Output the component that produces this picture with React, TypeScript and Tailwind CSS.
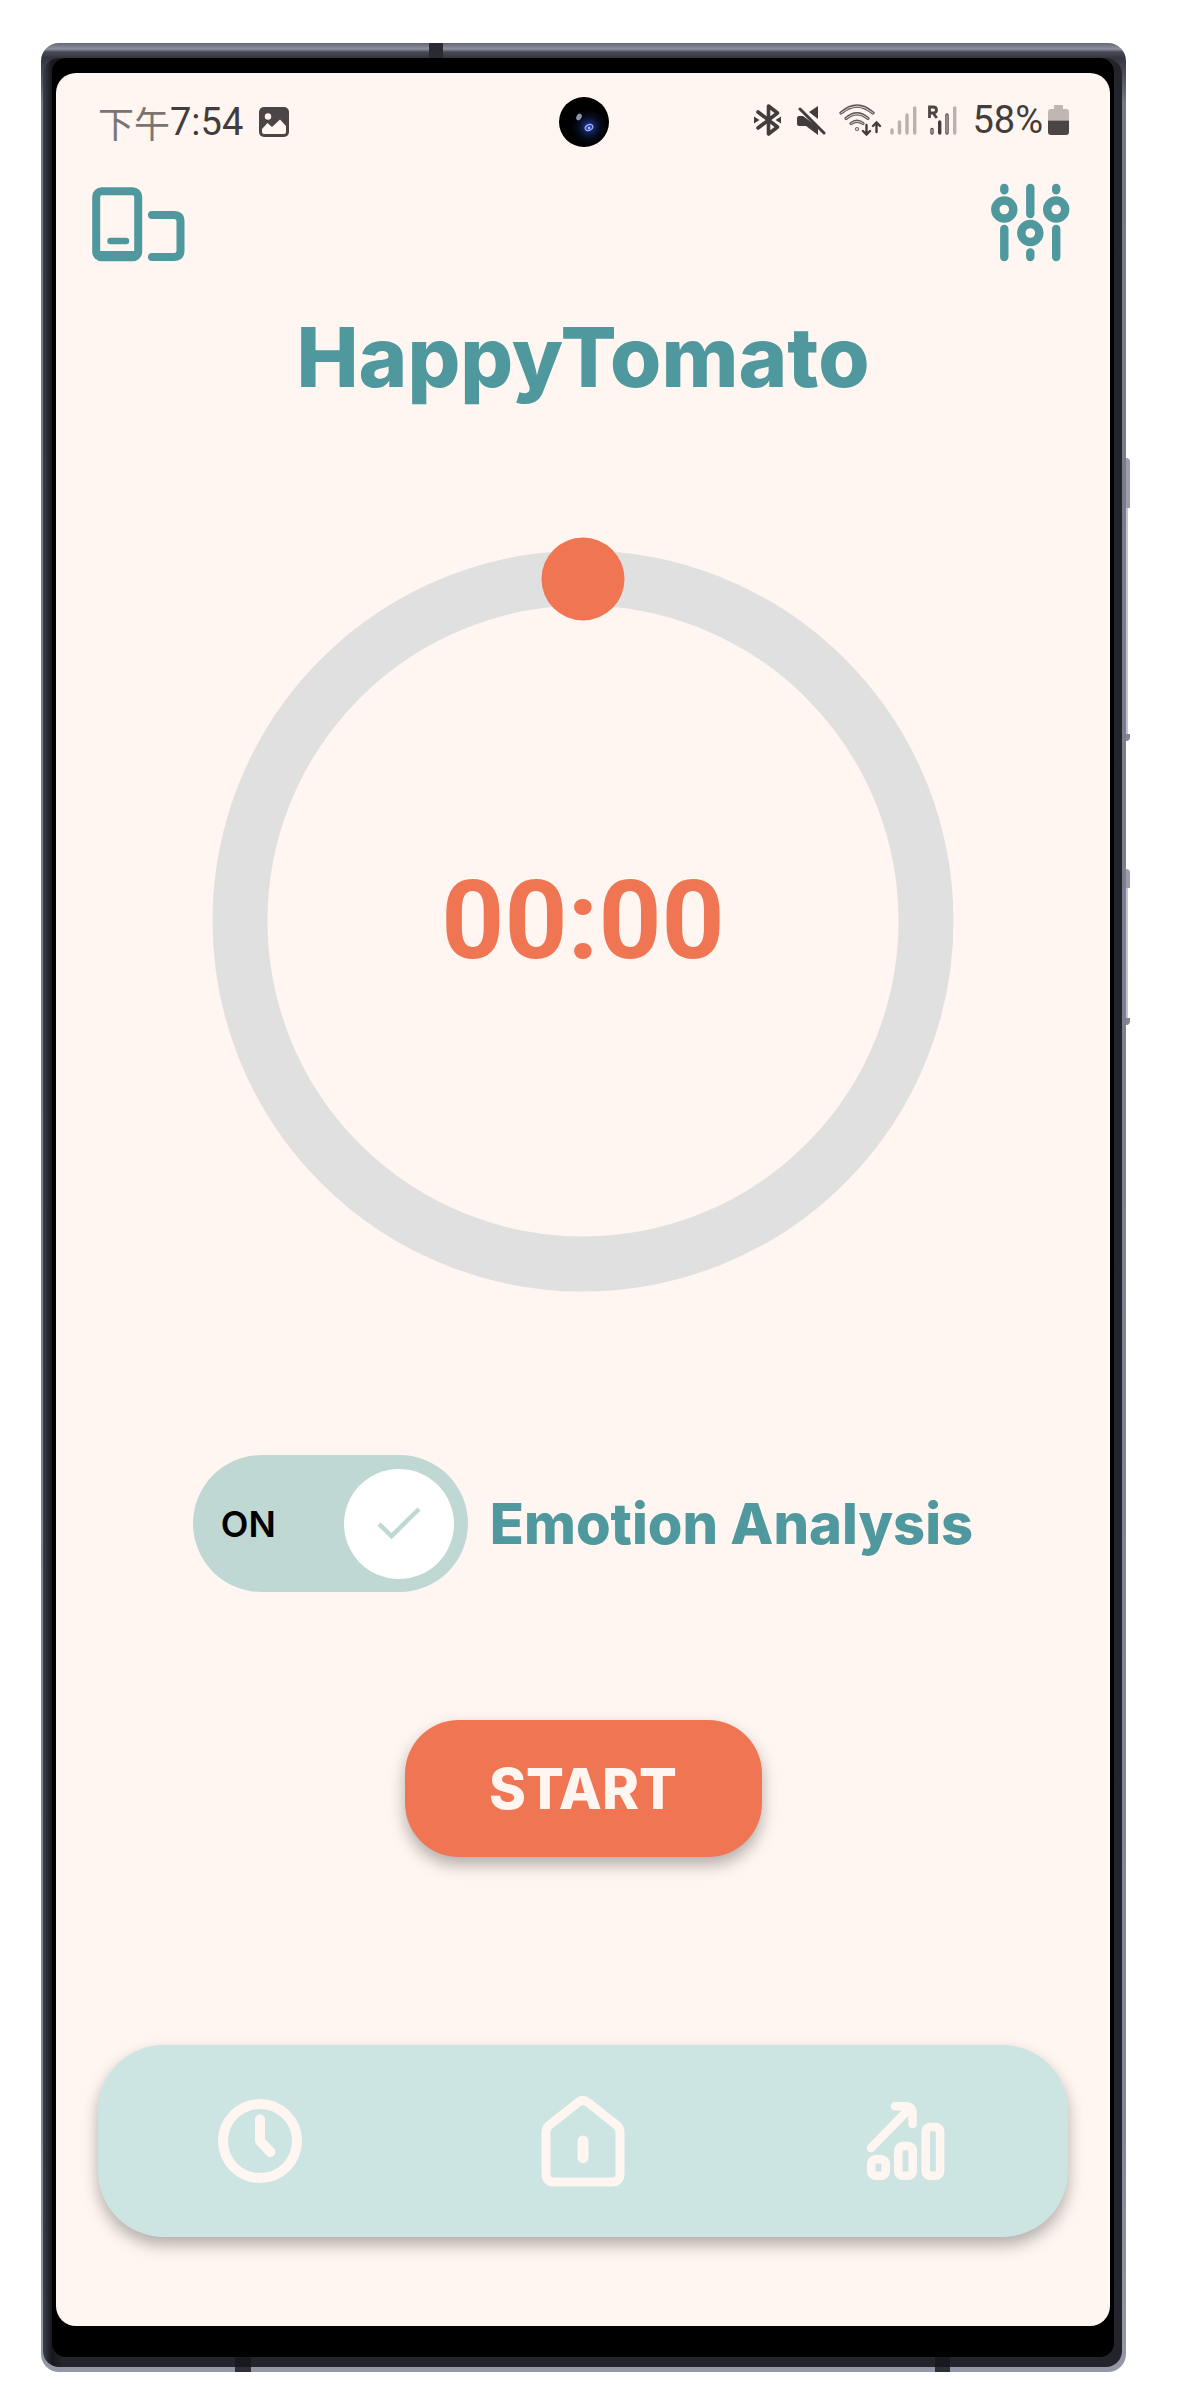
import React, { useState } from "react";

function ImageIcon() {
  return (
    <svg viewBox="0 0 30 30" className="size-[30px]" aria-hidden="true">
      <rect x="0" y="0" width="30" height="30" rx="5" fill="#4b4645" />
      <circle cx="9" cy="9.500" r="3.200" fill="#fff6f1" />
      <path d="M3 22 L8.500 16 L13 20 L21 12.500 L27 19 V25 Q27 27 25 27 H5 Q3 27 3 25 Z" fill="#fff6f1" />
    </svg>
  );
}

function BluetoothIcon() {
  return (
    <svg viewBox="0 0 27 32" className="h-8 w-[27px]" fill="none" stroke="#423d3c" strokeWidth="3.600" strokeLinecap="round" strokeLinejoin="round" aria-hidden="true">
      <path d="M4 8 L23.500 23 L14.500 30 V2 L23.500 9 L4 24" />
      <path d="M0 12.500 L5.500 16 L0 19.500 Z M27 12.500 L21.500 16 L27 19.500 Z" fill="#423d3c" stroke="none" />
    </svg>
  );
}

function MuteIcon() {
  return (
    <svg viewBox="0 0 29 30" className="h-[30px] w-[29px]" aria-hidden="true">
      <path d="M2 11 H6 L21 22 V30 L9 21 H2 Q0 21 0 19 V13 Q0 11 2 11 Z M21 1 V14 L12 7 Z" fill="#423d3c" />
      <path d="M3 4 L27 28" stroke="#423d3c" strokeWidth="3" strokeLinecap="round" />
    </svg>
  );
}

function WifiIcon() {
  return (
    <svg viewBox="0 0 43 32" className="h-8 w-[43px]" fill="none" strokeLinecap="round" aria-hidden="true">
      <g stroke="#5d5755" strokeWidth="3.200">
        <path d="M2 9 Q18 -5 34 9" />
        <path d="M7 14.500 Q18 5 29 14.500" />
        <path d="M12 19.500 Q18 15 24 19.500" />
      </g>
      <g stroke="#fff6f1" strokeWidth="0.800">
        <path d="M2 9 Q18 -5 34 9" />
        <path d="M7 14.500 Q18 5 29 14.500" />
        <path d="M12 19.500 Q18 15 24 19.500" />
      </g>
      <circle cx="18" cy="25" r="1.500" stroke="#6b6563" strokeWidth="1.200" />
      <path d="M27.500 21 V30 M24 27 L27.500 30.500 L31 27 M37.500 28 V19 M34 22 L37.500 18.500 L41 22" stroke="#423d3c" strokeWidth="2.400" />
    </svg>
  );
}

function SignalIcon() {
  return (
    <svg viewBox="0 0 27 29" className="h-[29px] w-[27px]" stroke="#bbb0ac" strokeWidth="3.400" strokeLinecap="round" aria-hidden="true">
      <path d="M2 27 V24 M9.500 27 V16 M17 27 V9 M24.700 27 V2" />
    </svg>
  );
}

function RoamingIcon() {
  return (
    <svg viewBox="0 0 30 30" className="h-[30px] w-[30px]" aria-hidden="true" strokeLinecap="round" fill="none">
      <path d="M2.500 13 V2 H6 Q9.500 2 9.500 5 Q9.500 8 6 8 H2.500 M6 8 L9.800 13" stroke="#4b4645" strokeWidth="2.800" strokeLinecap="butt" />
      <path d="M5 28 V24.500 M20 28 V10" stroke="#4b4645" strokeWidth="3.400" />
      <path d="M5 28 V24.500 M20 28 V10" stroke="#d8cdc9" strokeWidth="1" />
      <path d="M12.700 28 V17" stroke="#423d3c" strokeWidth="3.400" />
      <path d="M27.700 28 V3" stroke="#bbb0ac" strokeWidth="3.400" />
    </svg>
  );
}

function BatteryIcon() {
  return (
    <svg viewBox="0 0 22 30" className="h-[30px] w-[22px]" aria-hidden="true">
      <path d="M7 0 H14 Q15 0 15 1 V4 H18 Q21 4 21 7 V15.500 H0 V7 Q0 4 3 4 H6 V1 Q6 0 7 0 Z" fill="#c2b6b3" />
      <path d="M0 15.500 H21 V27 Q21 30 18 30 H3 Q0 30 0 27 Z" fill="#4b4645" />
    </svg>
  );
}

function DevicesIcon() {
  return (
    <svg viewBox="0 0 93 75" className="h-[75px] w-[93px]" fill="none" stroke="#4f989e" strokeLinecap="round" aria-hidden="true">
      <rect x="4.200" y="4.200" width="42" height="66" rx="5.500" strokeWidth="8" />
      <path d="M6 68 H44" strokeWidth="8" />
      <path d="M18.500 54 H34" strokeWidth="6.500" />
      <path d="M60 28 H82 Q88.500 28 88.500 34.500 V63.500 Q88.500 70 82 70 H60" strokeWidth="8" />
    </svg>
  );
}

function SlidersIcon() {
  return (
    <svg viewBox="0 0 79 79" className="size-[79px]" fill="none" stroke="#4f989e" strokeWidth="8.400" strokeLinecap="round" aria-hidden="true">
      <path d="M13.300 5 V7.200 M13.300 46 V74 M39.300 5 V31 M39.300 69.500 V74 M65.200 5 V7.200 M65.200 46 V74" />
      <circle cx="13.300" cy="26.500" r="9" />
      <circle cx="39.300" cy="50" r="9" />
      <circle cx="65.200" cy="26.500" r="9" />
    </svg>
  );
}

function ClockIcon() {
  return (
    <svg viewBox="0 0 86 92" className="h-[92px] w-[86px]" fill="none" stroke="#fff6f1" strokeWidth="10" strokeLinecap="round" strokeLinejoin="round" aria-hidden="true">
      <circle cx="43" cy="46" r="37" />
      <path d="M43 24.500 V46 L53.500 57" />
    </svg>
  );
}

function HomeIcon() {
  return (
    <svg viewBox="0 0 84 92" className="h-[92px] w-[84px]" fill="none" stroke="#fff6f1" strokeLinecap="round" strokeLinejoin="round" aria-hidden="true">
      <path d="M37 7.500 Q42 3.500 47 7.500 L75.500 30 Q79 33 79 37 V78.500 Q79 87 71 87 H13 Q5 87 5 78.500 V37 Q5 33 8.500 30 Z" strokeWidth="9" />
      <path d="M42 46 V62.500" strokeWidth="11" />
    </svg>
  );
}

function ChartIcon() {
  return (
    <svg viewBox="0 0 80 80" className="size-[80px]" fill="none" stroke="#fff6f1" strokeWidth="8.600" strokeLinecap="round" aria-hidden="true">
      <path d="M5 47 L43 8 M29 5.300 H40 Q46.500 5.300 46.500 12 V23" />
      <rect x="5.300" y="58.300" width="14.400" height="16.400" rx="4.500" />
      <rect x="32.300" y="45" width="14.400" height="29.700" rx="4.500" />
      <rect x="59.700" y="26" width="14.400" height="48.700" rx="4.500" />
    </svg>
  );
}

function StatusBar() {
  return (
    <div className="flex items-start justify-between pl-[42px] pr-10 pt-6 text-[#423d3c]">
      <div className="flex h-[50px] w-[380px] items-center gap-4">
        <span className="flex items-center font-[Roboto,sans-serif] text-[38px] leading-[50px]">
          <span className="font-['Noto_Sans_CJK_TC',sans-serif] text-[36px] text-[#7a7472]">下午</span>
          <span>7:54</span>
        </span>
        <ImageIcon />
      </div>
      <div className="size-[50px] rounded-full bg-[radial-gradient(circle_at_60%_60%,#2a55c8_0px,#13235f_5px,#070b1c_11px,#000_18px)]">
        <svg viewBox="0 0 50 50" className="size-full" aria-hidden="true">
          <ellipse cx="20" cy="20" rx="2.500" ry="3.500" fill="#8a94ac" transform="rotate(30 20 20)" />
          <ellipse cx="30" cy="30.500" rx="4" ry="2.800" fill="#2748c0" stroke="#b8caff" transform="rotate(-25 30 30.500)" />
          <circle cx="30" cy="31" r="1" fill="#fff" />
        </svg>
      </div>
      <div className="flex h-[46px] w-[380px] items-center justify-end">
        <BluetoothIcon />
        <span className="ml-4"><MuteIcon /></span>
        <span className="ml-[13px]"><WifiIcon /></span>
        <span className="ml-2"><SignalIcon /></span>
        <span className="ml-[10px]"><RoamingIcon /></span>
        <span className="ml-[15px] font-[Roboto,sans-serif] text-[38px] leading-[46px]">58%</span>
        <span className="ml-[5px]"><BatteryIcon /></span>
      </div>
    </div>
  );
}

function TimerDial() {
  return (
    <div className="relative mx-auto mt-[130px] flex h-[768px] w-[768px] max-w-full items-center justify-center">
      <svg viewBox="0 0 768 768" className="absolute inset-0 size-full" aria-hidden="true">
        <circle cx="384" cy="384" r="343" fill="none" stroke="#e0e0e0" strokeWidth="55" />
        <circle cx="384" cy="42" r="41.500" fill="#ef7553" />
      </svg>
      <time className="relative font-[Roboto,sans-serif] text-[110px] font-bold leading-[120px] text-[#ef7553]">00:00</time>
    </div>
  );
}

function EmotionToggle() {
  const [on, setOn] = useState(true);
  return (
    <div className="mt-[150px] flex items-center justify-center gap-[22px]">
      <label htmlFor="emotion" className="relative flex h-[137px] w-[275px] cursor-pointer items-center justify-between rounded-full bg-[#c0d8d3] pl-7 pr-[14px]">
        <input id="emotion" type="checkbox" role="switch" checked={on} onChange={() => setOn(!on)} aria-label="Emotion Analysis" className="absolute inset-0 size-full cursor-pointer opacity-0" />
        <span className="text-4xl font-semibold text-black">{on ? "ON" : "OFF"}</span>
        <span className="flex size-[110px] items-center justify-center rounded-full bg-white">
          <svg viewBox="0 0 44 34" className="h-[34px] w-11" fill="none" stroke="#c0d8d3" strokeWidth="4.500" aria-hidden="true">
            <path d="M2 17 L14.500 29 L42 2" />
          </svg>
        </span>
      </label>
      <span className="text-[56px] font-extrabold leading-[68px] text-[#4f989e]">Emotion Analysis</span>
    </div>
  );
}

export default function App() {
  return (
    <main className="bg-white pb-9 pl-[41px] pr-14 pt-[43px] font-[Inter,sans-serif]">
      <div className="relative rounded-[18px] bg-[linear-gradient(to_bottom,#666774_0px,#8e8fa0_6px,#484a55_9px,#33353e_15px,#777889_60px,#85869a_90%,#9596a6_100%)] pb-[5px] pl-[2px] pr-1 pt-[15px]">
        <i className="absolute left-[388px] top-0 h-[15px] w-[14px] bg-[#292a32]" />
        <i className="absolute bottom-0 left-[194px] z-10 h-[15px] w-4 bg-[#15161b]/80" />
        <i className="absolute bottom-0 right-[176px] z-10 h-[15px] w-[15px] bg-[#15161b]/80" />
        <div className="absolute -right-1 top-[415px] flex h-[283px] w-1 flex-col items-start justify-between bg-[linear-gradient(to_right,#c3c4cf_2px,transparent_2px)]">
          <i className="h-[50px] w-1 rounded-tr-sm bg-[#9c9dad]" />
          <i className="h-[7px] w-1 rounded-br-sm bg-[#85869a]" />
        </div>
        <div className="absolute -right-1 top-[826px] flex h-[156px] w-1 flex-col items-start justify-between bg-[linear-gradient(to_right,#c3c4cf_2px,transparent_2px)]">
          <i className="h-[19px] w-1 rounded-tr-sm bg-[#9c9dad]" />
          <i className="h-[7px] w-1 rounded-br-sm bg-[#85869a]" />
        </div>
        <div className="rounded-[16px] bg-[linear-gradient(to_right,#3d3f4a_0px,#17181c_9px,#24252c_20px,#24252c_calc(100%-12px),#22232b_100%)] pb-[10px] pl-[9px] pr-2">
          <div className="rounded-[14px] bg-black px-1 pb-[31px] pt-[15px]">
            <div className="rounded-[20px] bg-[#fff6f1] pb-[89px]">
              <StatusBar />
              <header className="flex items-center justify-between pl-9 pr-10 pt-9">
                <button type="button" aria-label="Devices" className="pt-1"><DevicesIcon /></button>
                <button type="button" aria-label="Settings"><SlidersIcon /></button>
              </header>
              <h1 className="mt-[45px] text-center text-[83px] font-extrabold leading-[100px] text-[#4f989e]">HappyTomato</h1>
              <TimerDial />
              <EmotionToggle />
              <div className="mt-32 flex justify-center">
                <button type="button" className="h-[137px] w-[357px] rounded-[54px] bg-[#ef7553] text-[56px] font-extrabold text-[#fff6f1] shadow-[0_8px_16px_rgba(0,0,0,0.3)]">START</button>
              </div>
              <nav className="mx-[42px] mt-[188px] grid h-48 grid-cols-3 place-items-center rounded-[66px] bg-[#cce4e2] shadow-[0_8px_16px_rgba(0,0,0,0.3)]">
                <button type="button" aria-label="History"><ClockIcon /></button>
                <button type="button" aria-label="Home"><HomeIcon /></button>
                <button type="button" aria-label="Statistics"><ChartIcon /></button>
              </nav>
            </div>
          </div>
        </div>
      </div>
    </main>
  );
}
